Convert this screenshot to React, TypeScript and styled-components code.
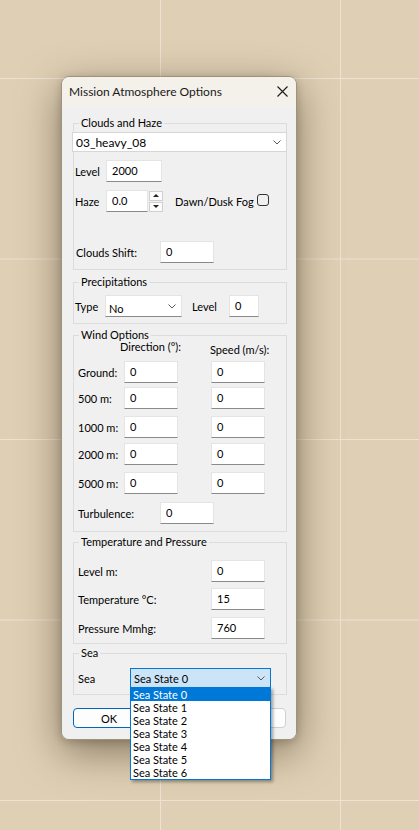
import React from 'react';
import styled, { createGlobalStyle } from 'styled-components';

const uiFont = 'Lato, Roboto, "Noto Sans", Arial, sans-serif';

const GlobalStyle = createGlobalStyle`
  html, body {
    margin: 0;
    padding: 0;
    background: #dfd0b5;
  }
`;

const Desktop = styled.div`
  box-sizing: border-box;
  width: 419px;
  height: 830px;
  padding: 76px 0 0 61px;
  overflow: hidden;
  background-color: #dfd0b5;
  background-image: linear-gradient(to right, #ece3d3 1px, transparent 1px),
    linear-gradient(to bottom, #ece3d3 1px, transparent 1px);
  background-size: 180px 830px, 419px 180.5px;
  background-position: 160px 0, 0 78px;
  font-family: ${uiFont};
`;

const Window = styled.div`
  position: relative;
  box-sizing: border-box;
  width: 236px;
  height: 664px;
  display: flex;
  flex-direction: column;
  border: 1px solid rgba(95, 85, 70, 0.5);
  border-radius: 8px;
  box-shadow: 0 12px 40px rgba(45, 30, 10, 0.5), 0 2px 8px rgba(0, 0, 0, 0.18);
  font-size: 11px;
  color: #000;
`;

const TitleBar = styled.div`
  height: 29px;
  flex: none;
  display: flex;
  align-items: center;
  justify-content: space-between;
  padding: 0 8px 0 7px;
  background: #f4f1eb;
  border-radius: 7px 7px 0 0;
`;

const Title = styled.span`
  font-size: 12px;
  color: #1a1a1a;
`;

const Body = styled.div`
  flex: 1;
  padding: 9px 9px 0 11px;
  background: #f0f0f0;
  border-radius: 0 0 7px 7px;
`;

const Group = styled.fieldset<{ $mt?: number; $pb: number }>`
  margin: ${(p) => p.$mt ?? 0}px 0 0;
  padding: 0 0 ${(p) => p.$pb}px;
  border: 1px solid #dcdcdc;
  min-inline-size: 0;
`;

const Legend = styled.legend`
  margin-left: 5px;
  padding: 0 2px;
  font-size: 11px;
  line-height: 16px;
`;

const Row = styled.div<{ $mt?: number; $pl?: number; $h?: number }>`
  display: flex;
  align-items: center;
  height: ${(p) => p.$h ?? 22}px;
  margin-top: ${(p) => p.$mt ?? 0}px;
  padding-left: ${(p) => p.$pl ?? 0}px;
`;

const HeaderRow = styled.div`
  display: flex;
  align-items: flex-start;
  height: 18px;
  padding-left: 46px;
`;

const Heading = styled.span<{ $w?: number; $mt: number }>`
  width: ${(p) => (p.$w ? `${p.$w}px` : 'auto')};
  margin-top: ${(p) => p.$mt}px;
  line-height: 16px;
  white-space: nowrap;
`;

const Label = styled.span<{ $w?: number; $ml?: number }>`
  flex: none;
  width: ${(p) => (p.$w ? `${p.$w}px` : 'auto')};
  margin-left: ${(p) => p.$ml ?? 0}px;
  white-space: nowrap;
`;

const TextBox = styled.div<{ $w: number; $ml?: number }>`
  box-sizing: border-box;
  flex: none;
  width: ${(p) => p.$w}px;
  height: 22px;
  margin-left: ${(p) => p.$ml ?? 0}px;
  padding: 1px 5px 0;
  line-height: 17px;
  background: #fff;
  border: 1px solid #e4e4e4;
  border-bottom-color: #8a8a8a;
`;

const Combo = styled.div<{ $w?: number; $h: number; $open?: boolean; $flat?: boolean }>`
  position: relative;
  box-sizing: border-box;
  flex: none;
  width: ${(p) => (p.$w ? `${p.$w}px` : 'auto')};
  height: ${(p) => p.$h}px;
  display: flex;
  align-items: center;
  justify-content: space-between;
  padding: 0 5px 0 3px;
  background: ${(p) => (p.$open ? '#cce4f7' : '#fff')};
  border: 1px solid ${(p) => (p.$open ? '#0078d7' : p.$flat ? '#e4e4e4' : '#d6d6d6')};
  border-bottom-color: ${(p) => (p.$open ? '#0078d7' : p.$flat ? '#8a8a8a' : '#d6d6d6')};
`;

const WideCombo = styled(Combo)`
  margin: 1px -1px 0 -2px;
  font-size: 12px;
`;

const ComboText = styled.span<{ $dy?: number }>`
  position: relative;
  top: ${(p) => p.$dy ?? 0}px;
  white-space: nowrap;
`;

const Spinner = styled.div`
  display: flex;
  flex-direction: column;
  justify-content: space-between;
  width: 14px;
  height: 21px;
  margin-left: 1px;
`;

const SpinButton = styled.div<{ $down?: boolean }>`
  box-sizing: border-box;
  height: 10px;
  display: flex;
  align-items: center;
  justify-content: center;
  background: #fbfbfb;
  border: 1px solid #d0d0d0;
  &::after {
    content: '';
    border-left: 3px solid transparent;
    border-right: 3px solid transparent;
    ${(p) => (p.$down ? 'border-top: 3px solid #222;' : 'border-bottom: 3px solid #222;')}
  }
`;

const CheckBox = styled.div`
  box-sizing: border-box;
  flex: none;
  width: 12px;
  height: 12px;
  margin: 0 0 2px 3px;
  border: 1px solid #333;
  border-radius: 3px;
`;

const DropList = styled.ul`
  position: absolute;
  top: 100%;
  left: -1px;
  right: -1px;
  margin: 0;
  padding: 0;
  list-style: none;
  background: #fff;
  border: 1px solid #0078d7;
  box-shadow: 2px 2px 3px rgba(0, 0, 0, 0.35);
  z-index: 5;
`;

const DropItem = styled.li<{ $selected?: boolean }>`
  height: 13px;
  line-height: 13px;
  padding-left: 2px;
  white-space: nowrap;
  background: ${(p) => (p.$selected ? '#0078d7' : 'transparent')};
  color: ${(p) => (p.$selected ? '#fff' : '#000')};
`;

const ButtonRow = styled.div`
  display: flex;
  justify-content: space-between;
  margin-top: 13px;
  padding-right: 1px;
`;

const Button = styled.div<{ $default?: boolean }>`
  box-sizing: border-box;
  width: 72px;
  height: 20px;
  display: flex;
  align-items: center;
  justify-content: center;
  background: #fdfdfd;
  border: 1px solid ${(p) => (p.$default ? '#0067c0' : '#cfcfcf')};
  border-radius: 4px;
`;

const Chevron = () => (
  <svg width="8" height="5" viewBox="0 0 8 5" fill="none">
    <polyline points="0.5,0.5 4,4 7.5,0.5" stroke="#5a5a5a" strokeWidth="1" />
  </svg>
);

const CloseIcon = () => (
  <svg width="11" height="11" viewBox="0 0 11 11" fill="none">
    <path d="M0.5 0.5 L10.5 10.5 M10.5 0.5 L0.5 10.5" stroke="#1a1a1a" strokeWidth="1.1" />
  </svg>
);

const windRows = [
  { label: 'Ground:', mt: 0 },
  { label: '500 m:', mt: 4 },
  { label: '1000 m:', mt: 7 },
  { label: '2000 m:', mt: 5 },
  { label: '5000 m:', mt: 7 },
];

const seaStates = [0, 1, 2, 3, 4, 5, 6].map((n) => `Sea State ${n}`);

export default function App() {
  return (
    <>
      <GlobalStyle />
      <Desktop>
        <Window>
          <TitleBar>
            <Title>Mission Atmosphere Options</Title>
            <CloseIcon />
          </TitleBar>
          <Body>
            <Group $pb={6}>
              <Legend>Clouds and Haze</Legend>
              <WideCombo $h={20}>
                <ComboText>03_heavy_08</ComboText>
                <Chevron />
              </WideCombo>
              <Row $mt={8} $pl={1}>
                <Label $w={31}>Level</Label>
                <TextBox $w={56}>2000</TextBox>
              </Row>
              <Row $mt={8} $pl={1}>
                <Label $w={31}>Haze</Label>
                <TextBox $w={42}>0.0</TextBox>
                <Spinner>
                  <SpinButton />
                  <SpinButton $down />
                </Spinner>
                <Label $ml={12}>Dawn/Dusk Fog</Label>
                <CheckBox />
              </Row>
              <Row $mt={29} $pl={2}>
                <Label $w={84}>Clouds Shift:</Label>
                <TextBox $w={54}>0</TextBox>
              </Row>
            </Group>

            <Group $mt={4} $pb={6}>
              <Legend>Precipitations</Legend>
              <Row $mt={5} $pl={1}>
                <Label $w={30}>Type</Label>
                <Combo $w={77} $h={22} $flat>
                  <ComboText $dy={2}>No</ComboText>
                  <Chevron />
                </Combo>
                <Label $w={37} $ml={10}>Level</Label>
                <TextBox $w={30}>0</TextBox>
              </Row>
            </Group>

            <Group $mt={3} $pb={7}>
              <Legend>Wind Options</Legend>
              <HeaderRow>
                <Heading $w={90} $mt={-4}>Direction (°):</Heading>
                <Heading $mt={-1}>Speed (m/s):</Heading>
              </HeaderRow>
              {windRows.map((r) => (
                <Row key={r.label} $mt={r.mt} $pl={4}>
                  <Label $w={46}>{r.label}</Label>
                  <TextBox $w={54}>0</TextBox>
                  <TextBox $w={54} $ml={33}>0</TextBox>
                </Row>
              ))}
              <Row $mt={8} $pl={4}>
                <Label $w={82}>Turbulence:</Label>
                <TextBox $w={54}>0</TextBox>
              </Row>
            </Group>

            <Group $mt={2} $pb={4}>
              <Legend>Temperature and Pressure</Legend>
              <Row $mt={10} $pl={4}>
                <Label $w={133}>Level m:</Label>
                <TextBox $w={54}>0</TextBox>
              </Row>
              <Row $mt={6} $pl={4}>
                <Label $w={133}>Temperature °C:</Label>
                <TextBox $w={54}>15</TextBox>
              </Row>
              <Row $mt={7} $pl={4}>
                <Label $w={133}>Pressure Mmhg:</Label>
                <TextBox $w={54}>760</TextBox>
              </Row>
            </Group>

            <Group $mt={1} $pb={6}>
              <Legend>Sea</Legend>
              <Row $mt={7} $pl={4} $h={20}>
                <Label $w={52}>Sea</Label>
                <Combo $w={141} $h={20} $open>
                  <ComboText>Sea State 0</ComboText>
                  <Chevron />
                  <DropList>
                    {seaStates.map((s, i) => (
                      <DropItem key={s} $selected={i === 0}>
                        {s}
                      </DropItem>
                    ))}
                  </DropList>
                </Combo>
              </Row>
            </Group>

            <ButtonRow>
              <Button $default>OK</Button>
              <Button>Cancel</Button>
            </ButtonRow>
          </Body>
        </Window>
      </Desktop>
    </>
  );
}
